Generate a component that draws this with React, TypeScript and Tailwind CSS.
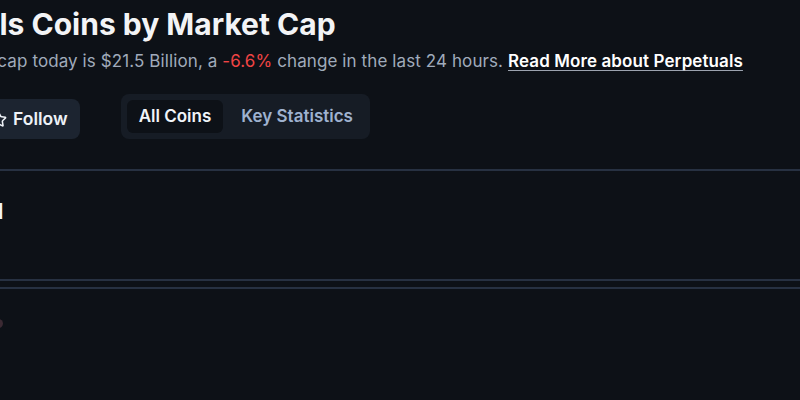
import { Star } from "lucide-react"

export default function App() {
  return (
    <div className="w-[800px] h-[400px] overflow-hidden bg-[#0d1117] font-['Inter',sans-serif] text-white">
      {/* Heading */}
      <div className="pt-[6px] whitespace-nowrap">
        <h1 className="-ml-[196px] text-[30px] font-bold leading-[36px] text-[#f3f4f6]">
          Top Perpetuals Coins by Market Cap
        </h1>
        <p className="mt-[7px] -ml-[246px] text-[17px] leading-[24px] tracking-[0.1px] text-[#a0abbb]">
          The global Perpetuals market cap today is $21.5 Billion, a{" "}
          <span className="text-[#ef4444]">-6.6%</span> change in the last 24 hours.{" "}
          <a className="font-semibold text-white underline underline-offset-[3px] decoration-[#9ca3af]">
            Read More about Perpetuals
          </a>
        </p>
      </div>

      {/* Follow + tabs */}
      <div className="mt-[21px] flex items-end gap-[41px] whitespace-nowrap">
        <button className="-ml-[24px] h-[40px] flex items-center gap-[6px] pl-[14px] pr-[12px] rounded-lg bg-[#1c2430] text-[17.5px] font-semibold text-[#eef2f7]">
          <Star className="w-[17px] h-[17px]" strokeWidth={2.2} />
          Follow
        </button>
        <div className="h-[45px] flex items-center gap-[4px] px-[6px] rounded-lg bg-[#161c25]">
          <span className="h-[33px] flex items-center px-[12px] rounded-md bg-[#0d1117] text-[17px] font-semibold text-[#f1f5f9]">
            All Coins
          </span>
          <span className="h-[33px] flex items-center pl-[14px] pr-[11px] text-[17px] font-semibold text-[#9fb2cf]">
            Key Statistics
          </span>
        </div>
      </div>

      {/* Table */}
      <div className="mt-[30px] border-t-[2px] border-[#273142]">
        <div className="h-[108px] pt-[27px]">
          <span className="-ml-[6px] text-[22px] font-bold leading-[26px] text-[#f1f5f9]">1</span>
        </div>
        <div className="h-[10px] border-y-[2px] border-[#273142]" />
        <div className="h-[105px] pt-[21px]">
          <span className="-ml-[6px] inline-block w-[9px] h-[9px] rounded-full bg-[#3b2a33]" />
        </div>
      </div>
    </div>
  )
}
